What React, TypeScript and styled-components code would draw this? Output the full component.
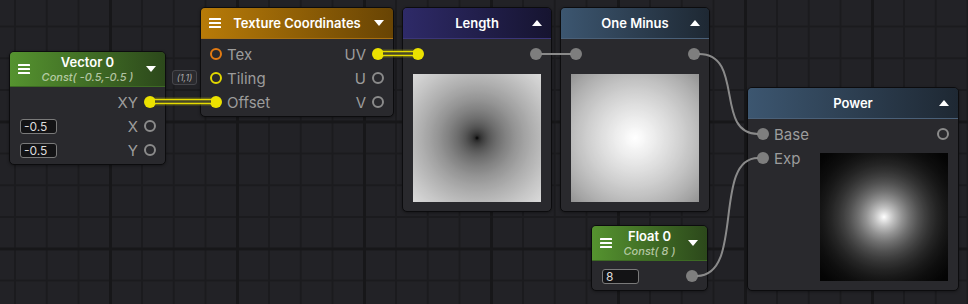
import React from 'react';
import styled, { createGlobalStyle, css } from 'styled-components';

const Global = createGlobalStyle`
  html, body { margin: 0; padding: 0; background: #222226; }
  body { font-family: Inter, "Noto Sans", sans-serif; }
`;

const Canvas = styled.div`
  position: relative;
  width: 968px;
  height: 304px;
  overflow: hidden;
  background-color: #222226;
  background-image:
    linear-gradient(90deg, #171719 0 3px, transparent 3px),
    linear-gradient(180deg, #171719 0 3px, transparent 3px),
    linear-gradient(90deg, #1b1b1e 0 2px, transparent 2px),
    linear-gradient(180deg, #1b1b1e 0 2px, transparent 2px);
  background-size: 127px 100%, 100% 127px, 31.75px 100%, 100% 31.75px;
  background-position: 109px 0, 0 120.5px, 14px 0, 0 25.5px;
`;

const Node = styled.div<{ $x: number; $y: number; $w: number }>`
  position: absolute;
  left: ${(p) => p.$x}px;
  top: ${(p) => p.$y}px;
  width: ${(p) => p.$w}px;
  box-sizing: border-box;
  background: #29292d;
  border: 1px solid #0c0c0e;
  border-radius: 5px;
  overflow: hidden;
  box-shadow: 0 1px 3px rgba(0, 0, 0, 0.35);
`;

type Tone = 'green' | 'orange' | 'purple' | 'slate';
const tones: Record<Tone, { from: string; to: string; line: string }> = {
  green: { from: '#55932f', to: '#2c481b', line: '#3d6a24' },
  orange: { from: '#b87b08', to: '#684404', line: '#a87012' },
  purple: { from: '#2e2a68', to: '#161430', line: '#3b3678' },
  slate: { from: '#3c5670', to: '#1e2833', line: '#4a6078' },
};

const Header = styled.div<{ $tone: Tone; $h: number }>`
  display: grid;
  grid-template-columns: 28px 1fr 28px;
  align-items: center;
  height: ${(p) => p.$h}px;
  background: linear-gradient(90deg, ${(p) => tones[p.$tone].from}, ${(p) => tones[p.$tone].to});
  border-bottom: 1px solid ${(p) => tones[p.$tone].line};
`;

const TitleBox = styled.div`
  grid-column: 2;
  display: flex;
  flex-direction: column;
  align-items: center;
  line-height: 1;
  min-width: 0;
`;

const Title = styled.div`
  color: #ffffff;
  font-weight: 600;
  font-size: 13px;
  white-space: nowrap;
`;

const Subtitle = styled.div`
  margin-top: 3px;
  color: rgba(225, 235, 215, 0.72);
  font-style: italic;
  font-weight: 500;
  font-size: 11px;
  white-space: nowrap;
`;

const MenuIcon = styled.svg`
  grid-column: 1;
  justify-self: center;
  display: block;
`;

const Arrow = styled.span<{ $up?: boolean }>`
  grid-column: 3;
  justify-self: center;
  width: 0;
  height: 0;
  border-left: 5px solid transparent;
  border-right: 5px solid transparent;
  ${(p) =>
    p.$up
      ? css`border-bottom: 6px solid #ffffff;`
      : css`border-top: 6px solid #ffffff;`}
`;

const Body = styled.div`
  padding: 3px 0 2px;
`;

const Row = styled.div`
  display: flex;
  align-items: center;
  height: 24px;
  padding: 0 9px;
  gap: 5px;
`;

const Label = styled.span<{ $push?: boolean }>`
  font-size: 15px;
  color: #9c9c9c;
  line-height: 1;
  white-space: nowrap;
  ${(p) => p.$push && css`margin-left: auto; margin-right: 1px;`}
`;

type PortKind = 'yellow' | 'gray' | 'ringGray' | 'ringYellow' | 'ringOrange';
const portStyles: Record<PortKind, ReturnType<typeof css>> = {
  yellow: css`background: #ebe100;`,
  gray: css`background: #7e7e7e;`,
  ringGray: css`border: 2.5px solid #8b8b8b;`,
  ringYellow: css`border: 2.5px solid #e2d800;`,
  ringOrange: css`border: 2.5px solid #e27a12;`,
};

const Port = styled.span<{ $kind: PortKind; $push?: boolean }>`
  flex: none;
  width: 12px;
  height: 12px;
  box-sizing: border-box;
  border-radius: 50%;
  ${(p) => portStyles[p.$kind]}
  ${(p) => p.$push && css`margin-left: auto;`}
`;

const Field = styled.span`
  flex: none;
  width: 37px;
  height: 15px;
  margin-left: 1px;
  box-sizing: border-box;
  padding-left: 3px;
  border: 1px solid #7a7a7a;
  border-radius: 3px;
  background: #131315;
  color: #dcdcdc;
  font-size: 12px;
  line-height: 13px;
`;

const ramp = (f: (d: number) => number) =>
  Array.from({ length: 41 }, (_, i) => {
    const r = i / 40;
    const lin = Math.max(0, Math.min(1, f(r * Math.SQRT1_2)));
    const v = Math.round(255 * Math.pow(lin, 1 / 2.2));
    return `rgb(${v},${v},${v}) ${(r * 100).toFixed(1)}%`;
  }).join(', ');

type PreviewKind = 'length' | 'oneMinus' | 'power';
const previewRamps: Record<PreviewKind, string> = {
  length: ramp((d) => d),
  oneMinus: ramp((d) => 1 - d),
  power: ramp((d) => Math.pow(1 - d, 8)),
};

const Preview = styled.div<{ $kind: PreviewKind }>`
  flex: none;
  width: 128px;
  height: 128px;
  margin: 8px auto 7px;
  background: radial-gradient(circle farthest-corner at 50% 50%, ${(p) => previewRamps[p.$kind]});
`;

const Split = styled.div`
  display: flex;
  align-items: flex-start;
  justify-content: space-between;
  padding-right: 10px;

  ${Preview} {
    margin: 7px 0 7px;
  }
`;

const Badge = styled.span`
  position: absolute;
  left: 172px;
  top: 70px;
  width: 25px;
  height: 15px;
  box-sizing: border-box;
  border: 1px solid #46464b;
  border-radius: 3px;
  background: #2a2a2e;
  color: #a8a8a8;
  font-size: 9px;
  font-style: italic;
  line-height: 13px;
  text-align: center;
`;

const Wires = styled.svg`
  position: absolute;
  left: 0;
  top: 0;
  pointer-events: none;
`;

const Menu = () => (
  <MenuIcon width="12" height="10" viewBox="0 0 12 10">
    <rect x="0" y="0" width="12" height="2" rx="0.5" fill="#fff" />
    <rect x="0" y="4" width="12" height="2" rx="0.5" fill="#fff" />
    <rect x="0" y="8" width="12" height="2" rx="0.5" fill="#fff" />
  </MenuIcon>
);

const DoubleWire = ({ d }: { d: string }) => (
  <g fill="none">
    <path d={d} stroke="rgba(150,150,20,0.22)" strokeWidth={9} />
    <path d={d} stroke="#e6dc00" strokeWidth={5.5} />
    <path d={d} stroke="#474729" strokeWidth={2.5} />
  </g>
);

const GrayWire = ({ d }: { d: string }) => (
  <path d={d} fill="none" stroke="#8a8a8a" strokeWidth={2} />
);

export default function App() {
  return (
    <>
      <Global />
      <Canvas>
        <Node $x={9} $y={51} $w={157}>
          <Header $tone="green" $h={34}>
            <Menu />
            <TitleBox>
              <Title>Vector 0</Title>
              <Subtitle>Const( -0.5,-0.5 )</Subtitle>
            </TitleBox>
            <Arrow />
          </Header>
          <Body>
            <Row>
              <Label $push>XY</Label>
              <Port $kind="yellow" />
            </Row>
            <Row>
              <Field>-0.5</Field>
              <Label $push>X</Label>
              <Port $kind="ringGray" />
            </Row>
            <Row>
              <Field>-0.5</Field>
              <Label $push>Y</Label>
              <Port $kind="ringGray" />
            </Row>
          </Body>
        </Node>

        <Badge>(1,1)</Badge>

        <Node $x={200} $y={7} $w={194}>
          <Header $tone="orange" $h={30}>
            <Menu />
            <TitleBox>
              <Title>Texture Coordinates</Title>
            </TitleBox>
            <Arrow />
          </Header>
          <Body>
            <Row>
              <Port $kind="ringOrange" />
              <Label>Tex</Label>
              <Label $push>UV</Label>
              <Port $kind="yellow" />
            </Row>
            <Row>
              <Port $kind="ringYellow" />
              <Label>Tiling</Label>
              <Label $push>U</Label>
              <Port $kind="ringGray" />
            </Row>
            <Row>
              <Port $kind="yellow" />
              <Label>Offset</Label>
              <Label $push>V</Label>
              <Port $kind="ringGray" />
            </Row>
          </Body>
        </Node>

        <Node $x={402} $y={7} $w={150}>
          <Header $tone="purple" $h={30}>
            <TitleBox>
              <Title>Length</Title>
            </TitleBox>
            <Arrow $up />
          </Header>
          <Body>
            <Row>
              <Port $kind="yellow" />
              <Port $kind="gray" $push />
            </Row>
            <Preview $kind="length" />
          </Body>
        </Node>

        <Node $x={560} $y={7} $w={150}>
          <Header $tone="slate" $h={30}>
            <TitleBox>
              <Title>One Minus</Title>
            </TitleBox>
            <Arrow $up />
          </Header>
          <Body>
            <Row>
              <Port $kind="gray" />
              <Port $kind="gray" $push />
            </Row>
            <Preview $kind="oneMinus" />
          </Body>
        </Node>

        <Node $x={747} $y={87} $w={212}>
          <Header $tone="slate" $h={30}>
            <TitleBox>
              <Title>Power</Title>
            </TitleBox>
            <Arrow $up />
          </Header>
          <Body>
            <Row>
              <Port $kind="gray" />
              <Label>Base</Label>
              <Port $kind="ringGray" $push />
            </Row>
            <Split>
              <Row>
                <Port $kind="gray" />
                <Label>Exp</Label>
              </Row>
              <Preview $kind="power" />
            </Split>
          </Body>
        </Node>

        <Node $x={591} $y={225} $w={117}>
          <Header $tone="green" $h={34}>
            <Menu />
            <TitleBox>
              <Title>Float 0</Title>
              <Subtitle>Const( 8 )</Subtitle>
            </TitleBox>
            <Arrow />
          </Header>
          <Body>
            <Row>
              <Field>8</Field>
              <Port $kind="gray" $push />
            </Row>
          </Body>
        </Node>

        <Wires width={968} height={304} viewBox="0 0 968 304">
          <DoubleWire d="M155 101.5 H211" />
          <DoubleWire d="M383 53.5 H413" />
          <GrayWire d="M541 54 H571" />
          <GrayWire d="M699 54 C745 54 714 134 758 134" />
          <GrayWire d="M697 276 C745 276 712 158 758 158" />
        </Wires>
      </Canvas>
    </>
  );
}
